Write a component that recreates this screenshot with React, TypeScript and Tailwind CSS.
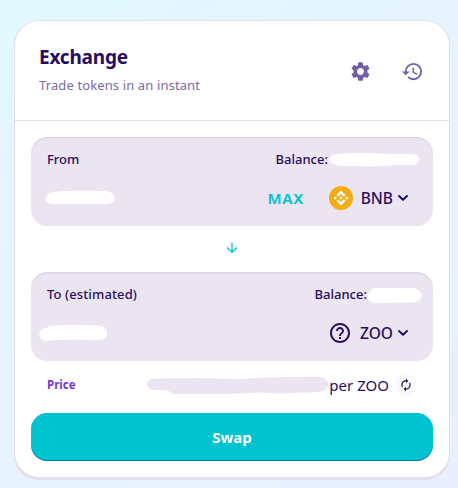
import type { ReactNode } from "react";
import {
	MdArrowDownward,
	MdAutorenew,
	MdHelpOutline,
	MdHistory,
	MdSettings,
} from "react-icons/md";

const Chevron = () => (
	<svg className="ml-1 h-2 w-3" viewBox="0 0 12 8" fill="none">
		<path
			d="M2 2l4 3.800 4-3.800"
			stroke="currentColor"
			strokeWidth="2"
			strokeLinecap="round"
			strokeLinejoin="round"
		/>
	</svg>
);

const BnbLogo = () => (
	<svg className="size-6" viewBox="0 0 32 32">
		<circle cx="16" cy="16" r="16" fill="#f3ac12" />
		<path
			fill="#fff"
			d="M12.116 14.404 16 10.52l3.886 3.886 2.26-2.26L16 6l-6.144 6.144 2.26 2.26zM6 16l2.26-2.26L10.52 16l-2.26 2.26L6 16zm6.116 1.596L16 21.48l3.886-3.886 2.26 2.259L16 26l-6.144-6.144-.003-.003 2.263-2.257zM21.48 16l2.26-2.26L26 16l-2.26 2.26L21.48 16zm-3.188-.002h.002V16L16 18.294l-2.291-2.29-.004-.004.004-.003.401-.402.195-.195L16 13.706l2.293 2.293z"
		/>
	</svg>
);

interface PanelProps {
	label: ReactNode;
	balance: ReactNode;
	amount: ReactNode;
	children: ReactNode;
}

const CurrencyPanel = ({ label, balance, amount, children }: PanelProps) => (
	<div className="h-[89px] rounded-2xl bg-[#ebe5f1] shadow-[inset_0_2px_2px_-1px_rgba(74,74,104,0.13)]">
		<div className="flex h-[45px] items-center justify-between pl-4 text-[13px] font-medium">
			{label}
			<div className="flex items-center">
				<span>Balance:</span>
				{balance}
			</div>
		</div>
		<div className="flex h-8 items-center justify-between">
			{amount}
			<div className="flex items-center text-[15.5px] font-medium">{children}</div>
		</div>
	</div>
);

export default function App() {
	return (
		<div className="h-[488px] w-[458px] bg-[linear-gradient(140deg,#e2f8ff_0%,#e9efff_100%)] pt-5 pl-3.5 font-['Noto_Sans',sans-serif] text-[#280d5f]">
			<div className="h-[460px] w-[436px] rounded-[25px] bg-[#e4deea] px-px pt-px pb-[3px]">
				<div className="h-full rounded-[24px] bg-white">
					<div className="flex h-[100px] items-center justify-between border-b border-[#e4deea] pr-[25px] pl-6">
						<div className="pb-[3px]">
							<h1 className="text-[19px] leading-[26px] font-bold tracking-[-0.2px]">
								Exchange
							</h1>
							<p className="mt-[5px] text-[13px] leading-5 tracking-[0.12px] text-[#7969ab]">
								Trade tokens in an instant
							</p>
						</div>
						<div className="flex gap-[29px] pt-px text-[#6f61a3]">
							<MdSettings className="size-[23px]" />
							<MdHistory className="size-[23px]" />
						</div>
					</div>
					<div className="p-4">
						<CurrencyPanel
							label={<span>From</span>}
							balance={
								<svg className="mr-[13px] h-4 w-[92px]" viewBox="0 0 92 16" fill="#fff">
									<path d="M2 5C4 1 20 1 40 1l25 1 18 0c11 0 11 11 1 11l-17 0c-8 1-18 2-33 1l-18 0C7 14 3 11 1 9z" />
								</svg>
							}
							amount={
								<svg className="ml-3.5 h-4 w-[71px]" viewBox="0 0 71 16" fill="#fff">
									<path d="M9 2C18 .5 52 .5 62 1.5c10 1 10 12 0 12.5H9C-2 14-2 4 9 2z" />
								</svg>
							}
						>
							<span className="mr-[25px] text-[15px] font-bold tracking-[0.5px] text-[#0cc5d2]">
								MAX
							</span>
							<BnbLogo />
							<span className="ml-2 pt-0.5">BNB</span>
							<Chevron />
							<span className="w-6" />
						</CurrencyPanel>
						<div className="flex h-[46px] items-center justify-center pb-0.5 text-[#03c3d1]">
							<MdArrowDownward className="size-4" />
						</div>
						<CurrencyPanel
							label={<span className="tracking-[0.12px]">To (estimated)</span>}
							balance={
								<svg className="mr-2.5 h-[18px] w-[56px]" viewBox="0 0 56 18" fill="#fff">
									<path d="M9 2h36c13 1 13 14 0 14.5L7 17C-1 15-1 9 4 4c1-1 3-2 5-2z" />
								</svg>
							}
							amount={
								<svg className="ml-2 h-[18px] w-[70px]" viewBox="0 0 70 18" fill="#fff">
									<path d="M10 2C22 .5 38 .8 58 1.5 72 2 72 16 56 16.500l-14-1-27 .5C9 18 2 17 1 13-1 8 3 4 8 4z" />
								</svg>
							}
						>
							<MdHelpOutline className="size-6" />
							<span className="ml-2 pt-0.5">ZOO</span>
							<Chevron />
							<span className="w-6" />
						</CurrencyPanel>
						<div className="flex h-[52px] items-center pr-4 pb-1 pl-4">
							<span className="text-[11.5px] font-bold text-[#7037d2]">Price</span>
							<svg
								className="ml-auto h-[18px] w-[181px]"
								viewBox="0 0 181 18"
								fill="#ebe5f1"
							>
								<path d="M7 2.500L50 2l45 1C120 1 145 1 172 .8c12 1 12 14 0 15.200l-40 1.500-17-1-35 1.500H28C23 18 25 14 14 14H7C-2 13-2 3 7 2.500z" />
							</svg>
							<span className="ml-px text-[15px]">per ZOO</span>
							<span className="ml-1.5 flex size-[22px] items-center justify-center rounded-full bg-[#faf9fa]">
								<MdAutorenew className="size-3.5" />
							</span>
						</div>
						<button
							type="button"
							className="h-12 w-full rounded-2xl bg-[#00c3d1] text-[15px] font-bold text-white shadow-[inset_0_-1px_0_rgba(14,14,44,0.4)]"
						>
							Swap
						</button>
					</div>
				</div>
			</div>
		</div>
	);
}
